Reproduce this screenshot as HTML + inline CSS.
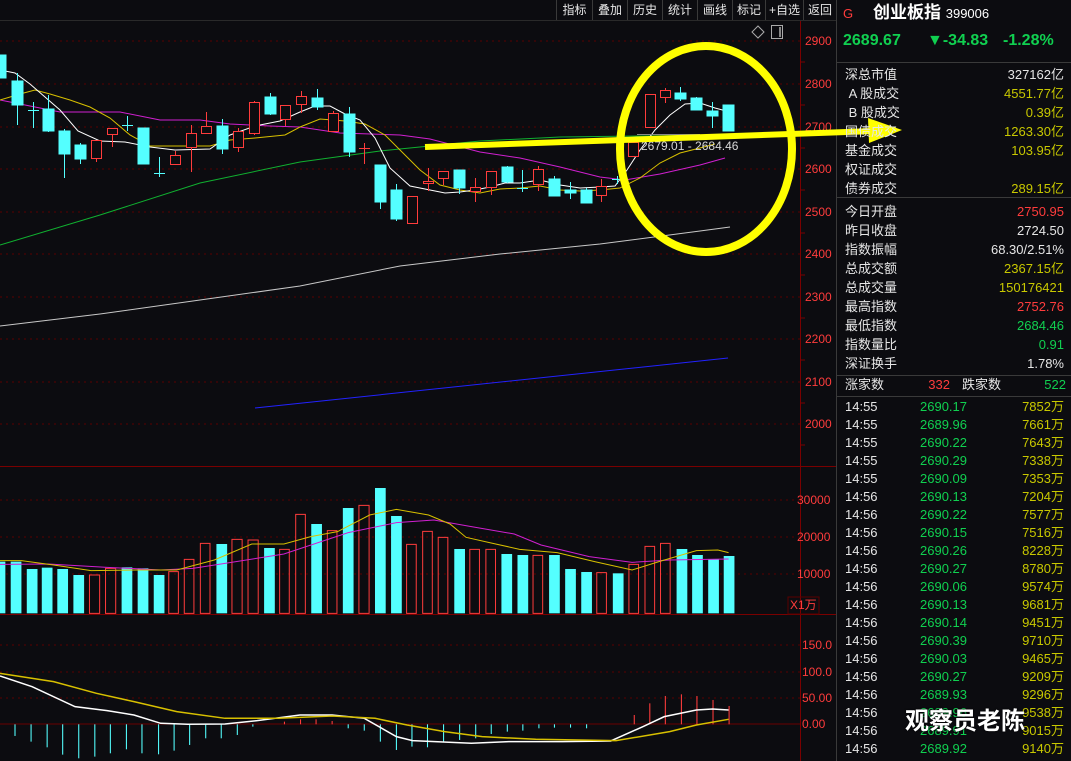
<!DOCTYPE html>
<html><head><meta charset="utf-8"><style>
*{margin:0;padding:0;box-sizing:border-box}
body{width:1071px;height:761px;background:#0c0c10;overflow:hidden;position:relative;font-family:"Liberation Sans","Noto Sans CJK SC",sans-serif;color:#e6e6e6}
.t{position:absolute;white-space:nowrap;font-size:13px;line-height:16px}
.r{text-align:right}
.tb{position:absolute;top:0;height:20px;font-size:12px;line-height:20px;color:#e6e6e6;border-left:1px solid #3a3a3a;text-align:center}
.y{color:#c8c800}.rd{color:#ff3c3c}.g{color:#10d050}.w{color:#e6e6e6}
</style></head><body>
<svg width="1071" height="761" style="position:absolute;left:0;top:0">
<g stroke="#5a0000" stroke-dasharray="2,4" stroke-width="1">
<line x1="0" y1="41" x2="800" y2="41"/><line x1="0" y1="84" x2="800" y2="84"/><line x1="0" y1="127" x2="800" y2="127"/><line x1="0" y1="169" x2="800" y2="169"/><line x1="0" y1="212" x2="800" y2="212"/><line x1="0" y1="254" x2="800" y2="254"/><line x1="0" y1="297" x2="800" y2="297"/><line x1="0" y1="339" x2="800" y2="339"/><line x1="0" y1="382" x2="800" y2="382"/><line x1="0" y1="424" x2="800" y2="424"/>
<line x1="0" y1="500" x2="800" y2="500"/><line x1="0" y1="537" x2="800" y2="537"/><line x1="0" y1="574" x2="800" y2="574"/>
<line x1="0" y1="645" x2="800" y2="645"/><line x1="0" y1="672" x2="800" y2="672"/><line x1="0" y1="698" x2="800" y2="698"/>
</g>
<line x1="0" y1="724" x2="800" y2="724" stroke="#6a0000"/>
<line x1="0" y1="466.5" x2="836" y2="466.5" stroke="#7a0000"/>
<line x1="0" y1="614.5" x2="836" y2="614.5" stroke="#7a0000"/>
<line x1="800.5" y1="20" x2="800.5" y2="761" stroke="#7a0000"/>
<line x1="836.5" y1="0" x2="836.5" y2="761" stroke="#3a3a3a"/>
<g stroke="#7a0000"><line x1="800" y1="62" x2="805" y2="62"/><line x1="800" y1="105" x2="805" y2="105"/><line x1="800" y1="148" x2="805" y2="148"/><line x1="800" y1="190" x2="805" y2="190"/><line x1="800" y1="233" x2="805" y2="233"/><line x1="800" y1="275" x2="805" y2="275"/><line x1="800" y1="318" x2="805" y2="318"/><line x1="800" y1="360" x2="805" y2="360"/><line x1="800" y1="403" x2="805" y2="403"/><line x1="800" y1="445" x2="805" y2="445"/></g>
<g font-size="12" fill="#ff3c3c" font-family="Liberation Sans,sans-serif">
<text x="805" y="45">2900</text><text x="805" y="88">2800</text><text x="805" y="131">2700</text><text x="805" y="173">2600</text><text x="805" y="216">2500</text><text x="805" y="258">2400</text><text x="805" y="301">2300</text><text x="805" y="343">2200</text><text x="805" y="386">2100</text><text x="805" y="428">2000</text>
<text x="797" y="504">30000</text><text x="797" y="541">20000</text><text x="797" y="578">10000</text>
<text x="790" y="609">X1万</text>
<text x="802" y="649">150.0</text><text x="802" y="676">100.0</text><text x="802" y="702">50.00</text><text x="802" y="728">0.00</text>
</g>
<rect x="788" y="597" width="31" height="17" fill="none" stroke="#5a0000"/>
<!-- MA lines -->
<polyline fill="none" stroke="#c8c8c8" stroke-width="1" points="0,326 100,314 200,300 300,286 400,266 500,254 600,244 700,231 730,227"/>
<polyline fill="none" stroke="#2222ff" stroke-width="1" points="255,408 728,358"/>
<polyline fill="none" stroke="#10b030" stroke-width="1" points="0,245 100,215 200,183 300,162 380,151 480,141 560,137 640,136 730,135"/>
<polyline fill="none" stroke="#d020d0" stroke-width="1" points="0,100 40,108 60,112 120,112 160,120 200,120 230,124 270,126 300,127 340,133 400,135 430,139 480,152 520,158 560,167 600,177 625,180 660,174 700,165 725,158"/>
<polyline fill="none" stroke="#d8c000" stroke-width="1" points="0,100 20,94 35,90 50,94 70,100 90,107 110,118 130,135 150,146 175,146 210,146 230,140 255,138 285,135 300,127 320,119 345,121 365,124 385,135 400,150 420,170 440,185 460,190 480,193 500,189 520,188 540,186 560,190 580,191 600,190 620,188 640,178 660,163 680,153 700,148 715,144"/>
<polyline fill="none" stroke="#ffffff" stroke-width="1" points="0,70 15,73 30,84 60,110 78,131 100,141 125,142 150,147 175,150 210,149 230,135 255,126 280,121 300,112 315,106 330,106 345,114 360,120 375,138 390,168 410,186 430,190 445,193 460,192 475,190 490,187 505,183 520,183 540,180 560,185 580,188 600,187 615,186 627,170 640,150 655,130 670,115 685,104 700,103 715,108 730,112"/>
<!-- candles -->
<g stroke-width="1">
<g stroke="#54ffff" fill="#54ffff">
<rect x="-4" y="55" width="10" height="23"/>
<line x1="17.5" y1="73" x2="17.5" y2="125"/><rect x="12" y="81" width="11" height="24"/>
<line x1="33.5" y1="102" x2="33.5" y2="128"/><line x1="28" y1="110.5" x2="39" y2="110.5"/>
<line x1="48.5" y1="95" x2="48.5" y2="132"/><rect x="43" y="109" width="11" height="22"/>
<line x1="64.5" y1="129" x2="64.5" y2="178"/><rect x="59" y="131" width="11" height="23"/>
<line x1="80.5" y1="143" x2="80.5" y2="164"/><rect x="75" y="145" width="11" height="14"/>
<line x1="127.5" y1="116" x2="127.5" y2="131"/><line x1="122" y1="125.5" x2="133" y2="125.5"/>
<rect x="138" y="128" width="11" height="36"/>
<line x1="159.5" y1="157" x2="159.5" y2="177"/><line x1="154" y1="173.5" x2="165" y2="173.5"/>
<line x1="222.5" y1="119" x2="222.5" y2="154"/><rect x="217" y="126" width="11" height="23"/>
<line x1="270.5" y1="93" x2="270.5" y2="115"/><rect x="265" y="97" width="11" height="17"/>
<line x1="317.5" y1="89" x2="317.5" y2="110"/><rect x="312" y="98" width="11" height="9"/>
<line x1="349.5" y1="107" x2="349.5" y2="157"/><rect x="344" y="114" width="11" height="38"/>
<line x1="380.5" y1="165" x2="380.5" y2="209"/><rect x="375" y="165" width="11" height="37"/>
<line x1="396.5" y1="184" x2="396.5" y2="221"/><rect x="391" y="190" width="11" height="29"/>
<line x1="459.5" y1="170" x2="459.5" y2="194"/><rect x="454" y="170" width="11" height="18"/>
<line x1="507.5" y1="166" x2="507.5" y2="183"/><rect x="502" y="167" width="11" height="15"/>
<line x1="522.5" y1="170" x2="522.5" y2="192"/><line x1="517" y1="188.5" x2="528" y2="188.5"/>
<line x1="554.5" y1="176" x2="554.5" y2="196"/><rect x="549" y="179" width="11" height="17"/>
<line x1="570.5" y1="182" x2="570.5" y2="199"/><rect x="565" y="190" width="11" height="3"/>
<line x1="586.5" y1="188" x2="586.5" y2="203"/><rect x="581" y="190" width="11" height="13"/>
<line x1="617.5" y1="176" x2="617.5" y2="184"/><line x1="612" y1="179.5" x2="623" y2="179.5"/>
<line x1="680.5" y1="87" x2="680.5" y2="101"/><rect x="675" y="93" width="11" height="6"/>
<line x1="696.5" y1="97" x2="696.5" y2="110"/><rect x="691" y="98" width="11" height="12"/>
<line x1="712.5" y1="102" x2="712.5" y2="128"/><rect x="707" y="111" width="11" height="5"/>
<rect x="723" y="105" width="11" height="26"/>
</g>
<g stroke="#ff3c3c" fill="#0c0c10">
<line x1="96.5" y1="140" x2="96.5" y2="162"/><rect x="91.5" y="140.5" width="10" height="18"/>
<line x1="112.5" y1="128" x2="112.5" y2="147"/><rect x="107.5" y="128.5" width="10" height="6"/>
<line x1="175.5" y1="151" x2="175.5" y2="165"/><rect x="170.5" y="155.5" width="10" height="9"/>
<line x1="191.5" y1="125" x2="191.5" y2="172"/><rect x="186.5" y="133.5" width="10" height="14"/>
<line x1="206.5" y1="112" x2="206.5" y2="134"/><rect x="201.5" y="126.5" width="10" height="7"/>
<line x1="238.5" y1="128" x2="238.5" y2="152"/><rect x="233.5" y="131.5" width="10" height="16"/>
<line x1="254.5" y1="101" x2="254.5" y2="135"/><rect x="249.5" y="102.5" width="10" height="31"/>
<line x1="285.5" y1="105" x2="285.5" y2="126"/><rect x="280.5" y="105.5" width="10" height="14"/>
<line x1="301.5" y1="91" x2="301.5" y2="113"/><rect x="296.5" y="96.5" width="10" height="8"/>
<line x1="333.5" y1="111" x2="333.5" y2="131"/><rect x="328.5" y="113.5" width="10" height="18"/>
<line x1="364.5" y1="143" x2="364.5" y2="164"/><line x1="359" y1="148.5" x2="370" y2="148.5"/>
<rect x="407.5" y="196.5" width="10" height="27"/>
<line x1="428.5" y1="168" x2="428.5" y2="191"/><rect x="423.5" y="181.5" width="10" height="2"/>
<line x1="443.5" y1="171" x2="443.5" y2="185"/><rect x="438.5" y="171.5" width="10" height="7"/>
<line x1="475.5" y1="178" x2="475.5" y2="202"/><rect x="470.5" y="187.5" width="10" height="4"/>
<line x1="491.5" y1="171" x2="491.5" y2="195"/><rect x="486.5" y="171.5" width="10" height="16"/>
<line x1="538.5" y1="166" x2="538.5" y2="191"/><rect x="533.5" y="169.5" width="10" height="15"/>
<line x1="601.5" y1="179" x2="601.5" y2="202"/><rect x="596.5" y="186.5" width="10" height="9"/>
<rect x="628.5" y="142.5" width="10" height="14"/>
<rect x="645.5" y="94.5" width="10" height="33"/>
<line x1="665.5" y1="88" x2="665.5" y2="103"/><rect x="660.5" y="90.5" width="10" height="7"/>
</g></g>
<line x1="637" y1="134.5" x2="700" y2="134.5" stroke="#888"/>
<text x="641" y="150" font-size="12" fill="#d8d8d8" font-family="Liberation Sans,sans-serif">2679.01 - 2684.46</text>
<!-- volume -->
<g transform="translate(0,460) scale(0.5357,0.3333)">
<g fill="#54ffff">
<rect x="0" y="305" width="10" height="155"/><rect x="20" y="305" width="20" height="155"/><rect x="50" y="327" width="20" height="133"/><rect x="78" y="323" width="20" height="137"/><rect x="107" y="327" width="20" height="133"/><rect x="137" y="345" width="20" height="115"/><rect x="227" y="322" width="20" height="138"/><rect x="257" y="325" width="20" height="135"/><rect x="287" y="345" width="20" height="115"/><rect x="404" y="252" width="20" height="208"/><rect x="493" y="264" width="20" height="196"/><rect x="581" y="192" width="20" height="268"/><rect x="640" y="144" width="20" height="316"/><rect x="700" y="84" width="20" height="376"/><rect x="730" y="168" width="20" height="292"/><rect x="848" y="267" width="20" height="193"/><rect x="936" y="282" width="20" height="178"/><rect x="966" y="285" width="20" height="175"/><rect x="1025" y="285" width="20" height="175"/><rect x="1055" y="327" width="20" height="133"/><rect x="1085" y="336" width="20" height="124"/><rect x="1144" y="340" width="20" height="120"/><rect x="1263" y="267" width="20" height="193"/><rect x="1292" y="285" width="20" height="175"/><rect x="1322" y="297" width="20" height="163"/><rect x="1351" y="288" width="20" height="172"/>
</g>
<g fill="none" stroke="#ff3c3c" stroke-width="1" vector-effect="non-scaling-stroke">
<rect x="167" y="345" width="19" height="115" vector-effect="non-scaling-stroke"/><rect x="197" y="325" width="19" height="135" vector-effect="non-scaling-stroke"/><rect x="315" y="335" width="18" height="125" vector-effect="non-scaling-stroke"/><rect x="344" y="298" width="18" height="162" vector-effect="non-scaling-stroke"/><rect x="374" y="250" width="18" height="210" vector-effect="non-scaling-stroke"/><rect x="433" y="238" width="19" height="222" vector-effect="non-scaling-stroke"/><rect x="463" y="240" width="19" height="220" vector-effect="non-scaling-stroke"/><rect x="522" y="268" width="18" height="192" vector-effect="non-scaling-stroke"/><rect x="552" y="163" width="18" height="297" vector-effect="non-scaling-stroke"/><rect x="611" y="212" width="18" height="248" vector-effect="non-scaling-stroke"/><rect x="670" y="136" width="19" height="324" vector-effect="non-scaling-stroke"/><rect x="759" y="253" width="18" height="207" vector-effect="non-scaling-stroke"/><rect x="789" y="214" width="18" height="246" vector-effect="non-scaling-stroke"/><rect x="818" y="232" width="18" height="228" vector-effect="non-scaling-stroke"/><rect x="877" y="268" width="18" height="192" vector-effect="non-scaling-stroke"/><rect x="907" y="268" width="18" height="192" vector-effect="non-scaling-stroke"/><rect x="995" y="286" width="18" height="174" vector-effect="non-scaling-stroke"/><rect x="1114" y="338" width="18" height="122" vector-effect="non-scaling-stroke"/><rect x="1174" y="313" width="18" height="147" vector-effect="non-scaling-stroke"/><rect x="1204" y="259" width="18" height="201" vector-effect="non-scaling-stroke"/><rect x="1233" y="250" width="18" height="210" vector-effect="non-scaling-stroke"/>
</g>
<polyline fill="none" stroke="#d020d0" vector-effect="non-scaling-stroke" points="0,313 90,312 200,322 300,330 360,325 420,310 530,282 650,218 740,188 810,180 880,200 960,222 1010,255 1100,290 1180,307 1250,300 1360,297"/>
<polyline fill="none" stroke="#d8c000" vector-effect="non-scaling-stroke" points="0,302 40,302 100,315 170,332 260,330 330,330 400,300 470,252 530,252 580,230 630,215 690,165 740,148 800,165 840,192 870,232 920,250 970,268 1040,278 1110,305 1180,330 1230,305 1300,272 1340,270 1360,278"/>
</g>
<!-- MACD -->
<g transform="translate(0,460) scale(0.5357,0.3333)">
<g stroke="#54ffff" stroke-width="2">
<line x1="28" y1="793" x2="28" y2="828"/><line x1="58" y1="793" x2="58" y2="845"/><line x1="88" y1="793" x2="88" y2="862"/><line x1="117" y1="793" x2="117" y2="884"/><line x1="147" y1="793" x2="147" y2="895"/><line x1="177" y1="793" x2="177" y2="890"/><line x1="206" y1="793" x2="206" y2="880"/><line x1="236" y1="793" x2="236" y2="868"/><line x1="265" y1="793" x2="265" y2="880"/><line x1="296" y1="793" x2="296" y2="883"/><line x1="325" y1="793" x2="325" y2="872"/><line x1="354" y1="793" x2="354" y2="855"/><line x1="384" y1="793" x2="384" y2="835"/><line x1="413" y1="793" x2="413" y2="835"/><line x1="443" y1="793" x2="443" y2="825"/><line x1="472" y1="793" x2="472" y2="800"/>
<line x1="650" y1="793" x2="650" y2="805"/><line x1="680" y1="793" x2="680" y2="812"/><line x1="710" y1="793" x2="710" y2="845"/><line x1="740" y1="793" x2="740" y2="870"/><line x1="769" y1="793" x2="769" y2="860"/><line x1="798" y1="793" x2="798" y2="862"/><line x1="828" y1="793" x2="828" y2="845"/><line x1="858" y1="793" x2="858" y2="840"/><line x1="888" y1="793" x2="888" y2="835"/><line x1="917" y1="793" x2="917" y2="822"/><line x1="947" y1="793" x2="947" y2="815"/><line x1="976" y1="793" x2="976" y2="812"/><line x1="1006" y1="793" x2="1006" y2="805"/><line x1="1035" y1="793" x2="1035" y2="803"/><line x1="1065" y1="793" x2="1065" y2="803"/><line x1="1095" y1="793" x2="1095" y2="805"/>
</g>
<g stroke="#ff3c3c" stroke-width="2">
<line x1="531" y1="793" x2="531" y2="785"/><line x1="561" y1="793" x2="561" y2="778"/><line x1="590" y1="793" x2="590" y2="778"/><line x1="620" y1="793" x2="620" y2="783"/>
<line x1="1184" y1="793" x2="1184" y2="765"/><line x1="1213" y1="793" x2="1213" y2="730"/><line x1="1242" y1="793" x2="1242" y2="708"/><line x1="1272" y1="793" x2="1272" y2="703"/><line x1="1301" y1="793" x2="1301" y2="708"/><line x1="1331" y1="793" x2="1331" y2="720"/><line x1="1361" y1="793" x2="1361" y2="738"/>
</g>
<polyline fill="none" stroke="#ffffff" stroke-width="1.5" vector-effect="non-scaling-stroke" points="0,648 60,680 140,740 200,752 250,765 300,790 350,793 420,792 480,782 560,765 620,765 680,775 740,830 770,842 880,850 950,845 1050,845 1140,843 1200,800 1240,770 1300,750 1330,747 1360,750"/>
<polyline fill="none" stroke="#d8c000" stroke-width="1.5" vector-effect="non-scaling-stroke" points="0,640 100,665 180,700 250,725 330,755 420,775 520,775 620,768 700,775 760,795 830,815 900,830 1000,838 1150,842 1250,815 1300,795 1360,778"/>
</g>
<!-- annotations -->
<ellipse cx="706" cy="149" rx="86" ry="103" fill="none" stroke="#ffff00" stroke-width="8"/>
<line x1="425" y1="147" x2="875" y2="131" stroke="#ffff00" stroke-width="6"/>
<polygon points="868,118 902,130 869,143" fill="#ffff00"/>
<!-- top icons -->
<path d="M758 26 L764 32 L758 38 L752 32 Z" fill="none" stroke="#aaa"/>
<rect x="771.5" y="25.5" width="11" height="13" fill="none" stroke="#aaa"/><rect x="779" y="27" width="2" height="10" fill="#888"/>
<line x1="0" y1="20.5" x2="836" y2="20.5" stroke="#2a2a2a"/>
<line x1="836" y1="62.5" x2="1071" y2="62.5" stroke="#3a3a3a"/>
<line x1="836" y1="197.5" x2="1071" y2="197.5" stroke="#3a3a3a"/>
<line x1="836" y1="375.5" x2="1071" y2="375.5" stroke="#3a3a3a"/>
<line x1="836" y1="396.5" x2="1071" y2="396.5" stroke="#3a3a3a"/>
</svg>
<div class="tb" style="left:556px;width:36px">指标</div>
<div class="tb" style="left:592px;width:35px">叠加</div>
<div class="tb" style="left:627px;width:35px">历史</div>
<div class="tb" style="left:662px;width:35px">统计</div>
<div class="tb" style="left:697px;width:35px">画线</div>
<div class="tb" style="left:732px;width:33px">标记</div>
<div class="tb" style="left:765px;width:38px">+自选</div>
<div class="tb" style="left:803px;width:33px">返回</div>
<div class="t rd" style="left:843px;top:6px;font-size:13px">G</div>
<div class="t" style="left:873px;top:3px;font-size:17px;line-height:20px;font-weight:bold;color:#fff">创业板指 <span style="font-size:13px;font-weight:normal">399006</span></div>
<div class="t g" style="left:843px;top:31px;font-size:16px;line-height:20px;font-weight:bold">2689.67</div>
<div class="t g" style="left:927px;top:31px;font-size:16px;line-height:20px;font-weight:bold">▼-34.83</div>
<div class="t g" style="left:1003px;top:31px;font-size:16px;line-height:20px;font-weight:bold">-1.28%</div>
<div style="position:absolute;left:845px;top:65px;width:219px">
<div style="display:flex;justify-content:space-between;height:19px;font-size:13px;line-height:19px"><span>深总市值</span><span>327162亿</span></div>
<div style="display:flex;justify-content:space-between;height:19px;font-size:13px;line-height:19px"><span>&nbsp;A 股成交</span><span class="y">4551.77亿</span></div>
<div style="display:flex;justify-content:space-between;height:19px;font-size:13px;line-height:19px"><span>&nbsp;B 股成交</span><span class="y">0.39亿</span></div>
<div style="display:flex;justify-content:space-between;height:19px;font-size:13px;line-height:19px"><span>国债成交</span><span class="y">1263.30亿</span></div>
<div style="display:flex;justify-content:space-between;height:19px;font-size:13px;line-height:19px"><span>基金成交</span><span class="y">103.95亿</span></div>
<div style="display:flex;justify-content:space-between;height:19px;font-size:13px;line-height:19px"><span>权证成交</span><span></span></div>
<div style="display:flex;justify-content:space-between;height:19px;font-size:13px;line-height:19px"><span>债券成交</span><span class="y">289.15亿</span></div>
</div>
<div style="position:absolute;left:845px;top:202px;width:219px">
<div style="display:flex;justify-content:space-between;height:19px;font-size:13px;line-height:19px"><span>今日开盘</span><span class="rd">2750.95</span></div>
<div style="display:flex;justify-content:space-between;height:19px;font-size:13px;line-height:19px"><span>昨日收盘</span><span>2724.50</span></div>
<div style="display:flex;justify-content:space-between;height:19px;font-size:13px;line-height:19px"><span>指数振幅</span><span>68.30/2.51%</span></div>
<div style="display:flex;justify-content:space-between;height:19px;font-size:13px;line-height:19px"><span>总成交额</span><span class="y">2367.15亿</span></div>
<div style="display:flex;justify-content:space-between;height:19px;font-size:13px;line-height:19px"><span>总成交量</span><span class="y">150176421</span></div>
<div style="display:flex;justify-content:space-between;height:19px;font-size:13px;line-height:19px"><span>最高指数</span><span class="rd">2752.76</span></div>
<div style="display:flex;justify-content:space-between;height:19px;font-size:13px;line-height:19px"><span>最低指数</span><span class="g">2684.46</span></div>
<div style="display:flex;justify-content:space-between;height:19px;font-size:13px;line-height:19px"><span>指数量比</span><span class="g">0.91</span></div>
<div style="display:flex;justify-content:space-between;height:19px;font-size:13px;line-height:19px"><span>深证换手</span><span>1.78%</span></div>
</div>
<div class="t" style="left:845px;top:377px">涨家数</div><div class="t rd r" style="left:900px;top:377px;width:50px">332</div>
<div class="t" style="left:962px;top:377px">跌家数</div><div class="t g r" style="left:1010px;top:377px;width:56px">522</div>
<div style="position:absolute;left:845px;top:398px;width:219px;font-size:13px;line-height:18px">
<div style="display:flex;height:18px"><span style="width:75px">14:55</span><span class="g" style="width:75px">2690.17</span><span class="y" style="flex:1;text-align:right">7852万</span></div>
<div style="display:flex;height:18px"><span style="width:75px">14:55</span><span class="g" style="width:75px">2689.96</span><span class="y" style="flex:1;text-align:right">7661万</span></div>
<div style="display:flex;height:18px"><span style="width:75px">14:55</span><span class="g" style="width:75px">2690.22</span><span class="y" style="flex:1;text-align:right">7643万</span></div>
<div style="display:flex;height:18px"><span style="width:75px">14:55</span><span class="g" style="width:75px">2690.29</span><span class="y" style="flex:1;text-align:right">7338万</span></div>
<div style="display:flex;height:18px"><span style="width:75px">14:55</span><span class="g" style="width:75px">2690.09</span><span class="y" style="flex:1;text-align:right">7353万</span></div>
<div style="display:flex;height:18px"><span style="width:75px">14:56</span><span class="g" style="width:75px">2690.13</span><span class="y" style="flex:1;text-align:right">7204万</span></div>
<div style="display:flex;height:18px"><span style="width:75px">14:56</span><span class="g" style="width:75px">2690.22</span><span class="y" style="flex:1;text-align:right">7577万</span></div>
<div style="display:flex;height:18px"><span style="width:75px">14:56</span><span class="g" style="width:75px">2690.15</span><span class="y" style="flex:1;text-align:right">7516万</span></div>
<div style="display:flex;height:18px"><span style="width:75px">14:56</span><span class="g" style="width:75px">2690.26</span><span class="y" style="flex:1;text-align:right">8228万</span></div>
<div style="display:flex;height:18px"><span style="width:75px">14:56</span><span class="g" style="width:75px">2690.27</span><span class="y" style="flex:1;text-align:right">8780万</span></div>
<div style="display:flex;height:18px"><span style="width:75px">14:56</span><span class="g" style="width:75px">2690.06</span><span class="y" style="flex:1;text-align:right">9574万</span></div>
<div style="display:flex;height:18px"><span style="width:75px">14:56</span><span class="g" style="width:75px">2690.13</span><span class="y" style="flex:1;text-align:right">9681万</span></div>
<div style="display:flex;height:18px"><span style="width:75px">14:56</span><span class="g" style="width:75px">2690.14</span><span class="y" style="flex:1;text-align:right">9451万</span></div>
<div style="display:flex;height:18px"><span style="width:75px">14:56</span><span class="g" style="width:75px">2690.39</span><span class="y" style="flex:1;text-align:right">9710万</span></div>
<div style="display:flex;height:18px"><span style="width:75px">14:56</span><span class="g" style="width:75px">2690.03</span><span class="y" style="flex:1;text-align:right">9465万</span></div>
<div style="display:flex;height:18px"><span style="width:75px">14:56</span><span class="g" style="width:75px">2690.27</span><span class="y" style="flex:1;text-align:right">9209万</span></div>
<div style="display:flex;height:18px"><span style="width:75px">14:56</span><span class="g" style="width:75px">2689.93</span><span class="y" style="flex:1;text-align:right">9296万</span></div>
<div style="display:flex;height:18px"><span style="width:75px">14:56</span><span class="g" style="width:75px">2689.96</span><span class="y" style="flex:1;text-align:right">9538万</span></div>
<div style="display:flex;height:18px"><span style="width:75px">14:56</span><span class="g" style="width:75px">2689.91</span><span class="y" style="flex:1;text-align:right">9015万</span></div>
<div style="display:flex;height:18px"><span style="width:75px">14:56</span><span class="g" style="width:75px">2689.92</span><span class="y" style="flex:1;text-align:right">9140万</span></div>
</div>
<div class="t" style="left:905px;top:707px;font-size:24px;line-height:30px;font-weight:bold;color:#fff;text-shadow:0 0 2px #000">观察员老陈</div>
</body></html>
